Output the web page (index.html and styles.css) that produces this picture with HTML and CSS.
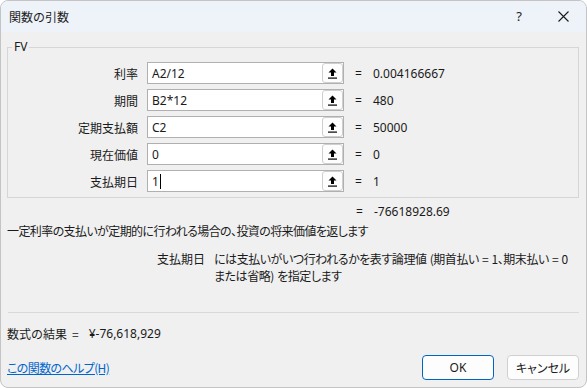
FILE: index.html
```html
<!DOCTYPE html>
<html lang="ja">
<head>
<meta charset="utf-8">
<title>関数の引数</title>
<link rel="stylesheet" href="styles.css">
</head>
<body>
<div class="window">
  <div class="titlebar">
    <span class="title">関数の引数</span>
    <span class="tb-help">?</span>
    <span class="tb-close"><svg width="11" height="11" viewBox="0 0 11 11"><path d="M0.5 0.5L10.5 10.5M10.5 0.5L0.5 10.5" stroke="#1a1a1a" stroke-width="1.1" fill="none"/></svg></span>
  </div>
  <div class="content">
    <fieldset class="group">
      <legend>FV</legend>
      <div class="args">
        <span class="lbl">利率</span>
        <div class="field"><span class="fv">A2/12</span><span class="ref"><svg width="9" height="11" viewBox="0 0 9 11"><path d="M4.5 0.5L0.5 4.5H3V8H6V4.5H8.5Z" fill="#000"/><rect x="0" y="9.5" width="9" height="1.2" fill="#000"/></svg></span></div>
        <span class="eq">=</span><span class="val">0.004166667</span>

        <span class="lbl">期間</span>
        <div class="field"><span class="fv">B2*12</span><span class="ref"><svg width="9" height="11" viewBox="0 0 9 11"><path d="M4.5 0.5L0.5 4.5H3V8H6V4.5H8.5Z" fill="#000"/><rect x="0" y="9.5" width="9" height="1.2" fill="#000"/></svg></span></div>
        <span class="eq">=</span><span class="val">480</span>

        <span class="lbl">定期支払額</span>
        <div class="field"><span class="fv">C2</span><span class="ref"><svg width="9" height="11" viewBox="0 0 9 11"><path d="M4.5 0.5L0.5 4.5H3V8H6V4.5H8.5Z" fill="#000"/><rect x="0" y="9.5" width="9" height="1.2" fill="#000"/></svg></span></div>
        <span class="eq">=</span><span class="val">50000</span>

        <span class="lbl">現在価値</span>
        <div class="field"><span class="fv">0</span><span class="ref"><svg width="9" height="11" viewBox="0 0 9 11"><path d="M4.5 0.5L0.5 4.5H3V8H6V4.5H8.5Z" fill="#000"/><rect x="0" y="9.5" width="9" height="1.2" fill="#000"/></svg></span></div>
        <span class="eq">=</span><span class="val">0</span>

        <span class="lbl">支払期日</span>
        <div class="field"><span class="fv">1<span class="caret"></span></span><span class="ref"><svg width="9" height="11" viewBox="0 0 9 11"><path d="M4.5 0.5L0.5 4.5H3V8H6V4.5H8.5Z" fill="#000"/><rect x="0" y="9.5" width="9" height="1.2" fill="#000"/></svg></span></div>
        <span class="eq">=</span><span class="val">1</span>
      </div>
    </fieldset>

    <div class="result"><span class="eq-r">=</span><span>-76618928.69</span></div>
    <p class="desc">一定利率の支払いが定期的に行われる場合の、投資の将来価値を返します</p>
    <div class="param">
      <span class="pname">支払期日</span>
      <span class="ptext">には支払いがいつ行われるかを表す論理値 (期首払い = 1、期末払い = 0<br>または省略) を指定します</span>
    </div>

    <div class="sep"></div>
    <div class="formula"><span>数式の結果</span><span class="f-eq">=</span><span class="f-val">¥-76,618,929</span></div>
    <div class="footer">
      <a class="help" href="#">この関数のヘルプ(H)</a>
      <div class="buttons">
        <button class="btn primary">OK</button>
        <button class="btn">キャンセル</button>
      </div>
    </div>
  </div>
</div>
</body>
</html>
```

FILE: styles.css
```css
* { box-sizing: border-box; }
html, body {
  margin: 0;
  padding: 0;
  background: #ffffff;
}
body {
  font-family: "Segoe UI", "Noto Sans", "Noto Sans CJK JP", sans-serif;
  font-size: 12px;
  line-height: 17px;
  color: #1a1a1a;
}
.window {
  width: 587px;
  height: 388px;
  border: 1px solid #c4c4c4;
  border-radius: 8px;
  overflow: hidden;
  background: #f0f0f0;
  display: flex;
  flex-direction: column;
}
.titlebar {
  height: 31px;
  flex: none;
  background: #eef2f9;
  display: flex;
  align-items: center;
  padding-left: 8px;
}
.title {
  flex: 1;
  font-family: "Noto Sans CJK JP", sans-serif;
  color: #1a1a1a;
}
.tb-help {
  width: 20px;
  text-align: center;
  font-size: 13px;
  margin-right: 29px;
}
.tb-close {
  width: 11px;
  height: 11px;
  display: flex;
  margin-right: 17px;
}
.content {
  flex: 1;
  padding: 0 7px 0 6px;
  display: flex;
  flex-direction: column;
}
.group {
  margin: 7px 0 0 0;
  padding: 7px 0 5px 0;
  border: 1px solid #d6d6d6;
  min-width: 0;
}
.group legend {
  padding: 0 2px;
  margin-left: 4px;
  line-height: 16px;
  color: #1a1a1a;
}
.args {
  display: grid;
  grid-template-columns: 139px 197px 29px 1fr;
  grid-auto-rows: 22px;
  row-gap: 5px;
  align-items: center;
}
.lbl {
  font-family: "Noto Sans CJK JP", sans-serif;
  text-align: right;
  padding-right: 9px;
}
.field {
  height: 22px;
  background: #ffffff;
  border: 1px solid #b0b0b0;
  display: flex;
  align-items: center;
  justify-content: space-between;
  padding-left: 4px;
}
.fv {
  display: flex;
  align-items: center;
}
.caret {
  width: 1px;
  height: 15px;
  background: #000;
  margin-left: 1px;
}
.ref {
  width: 21px;
  height: 20px;
  border: 1px solid #cfcfcf;
  border-radius: 3px;
  background: #fdfdfd;
  display: flex;
  align-items: center;
  justify-content: center;
}
.eq {
  padding-left: 11px;
}
.val {
  color: #1a1a1a;
}
.result {
  margin-top: 5px;
  padding-left: 349px;
  line-height: 18px;
  display: flex;
}
.eq-r {
  width: 18px;
}
.desc {
  margin: 1px 0 0 0;
  line-height: 18px;
  font-family: "Noto Sans CJK JP", sans-serif;
  font-feature-settings: "palt";
  letter-spacing: -0.6px;
}
.param {
  margin-top: 10px;
  display: grid;
  grid-template-columns: 198px 1fr;
  column-gap: 9px;
  font-family: "Noto Sans CJK JP", sans-serif;
  font-feature-settings: "palt";
}
.pname {
  text-align: right;
}
.ptext {
  white-space: nowrap;
  letter-spacing: -0.45px;
  word-spacing: 1px;
}
.sep {
  margin-top: 28px;
  height: 1px;
  background: #d9d9d9;
  margin-left: 1px;
}
.formula {
  margin-top: 12px;
  display: flex;
  font-family: "Noto Sans CJK JP", sans-serif;
}
.f-eq {
  margin-left: 5px;
}
.f-val {
  margin-left: 10px;
  font-family: "Segoe UI", "Noto Sans", "Noto Sans CJK JP", sans-serif;
}
.footer {
  margin-top: 13px;
  display: flex;
  align-items: center;
  justify-content: space-between;
}
.help {
  color: #0066cc;
  text-decoration: underline;
  font-family: "Noto Sans CJK JP", sans-serif;
  font-feature-settings: "palt";
  letter-spacing: -0.6px;
}
.buttons {
  display: flex;
  gap: 13px;
}
.btn {
  width: 72px;
  height: 25px;
  border: 1px solid #d0d0d0;
  border-radius: 4px;
  background: #fdfdfd;
  font-family: "Segoe UI", "Noto Sans", "Noto Sans CJK JP", sans-serif;
  font-feature-settings: "palt";
  font-size: 12px;
  color: #1a1a1a;
  padding: 0;
}
.btn.primary {
  border-color: #0067c0;
}
```
